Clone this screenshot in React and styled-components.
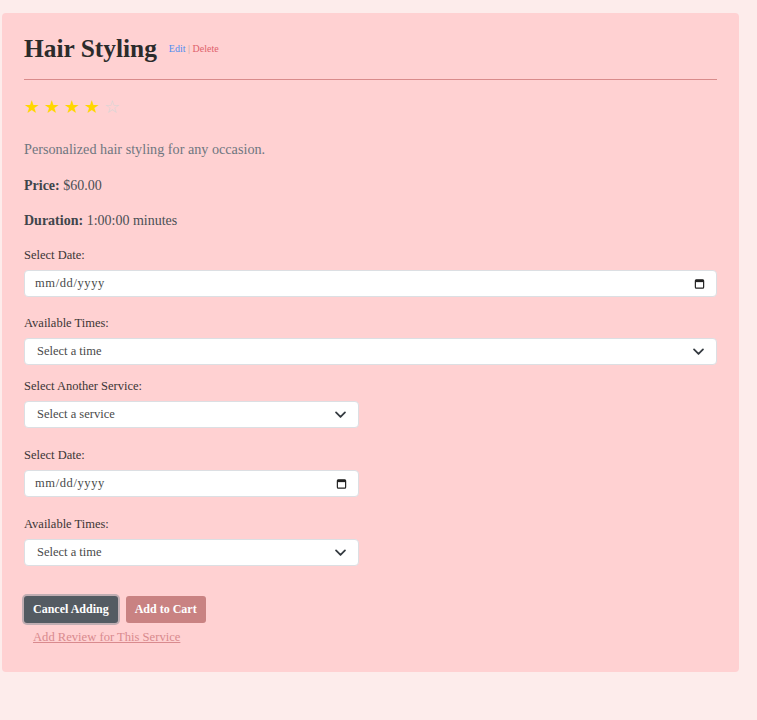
import React from 'react';
import styled, { createGlobalStyle } from 'styled-components';

const GlobalStyle = createGlobalStyle`
  body {
    margin: 0;
    background: #fdeceb;
    font-family: "Liberation Serif", "Times New Roman", serif;
    color: #3a3a3a;
  }
`;

const Page = styled.div`
  padding: 13px 18px 48px 2px;
`;

const Card = styled.div`
  background: #ffd1d2;
  border-radius: 4px;
  padding: 20px 22px 26px;
  display: flex;
  flex-direction: column;
`;

const TitleRow = styled.div`
  display: flex;
  align-items: center;
  gap: 12px;
  height: 30px;
`;

const Title = styled.h2`
  margin: 0;
  font-size: 25.4px;
  line-height: 30px;
  font-weight: 700;
  color: #2b2b2b;
`;

const Actions = styled.span`
  font-size: 10px;
  margin-top: 1px;
  color: #b9a2a2;
`;

const ActionLink = styled.a`
  color: ${(p) => (p.danger ? '#e0626c' : '#4d8cf0')};
  text-decoration: none;
  cursor: pointer;
`;

const Rule = styled.hr`
  border: 0;
  border-top: 1px solid #d98b8b;
  margin: 16px 0 0;
`;

const Stars = styled.div`
  display: flex;
  gap: 4px;
  margin-top: 15px;
  font-size: 18px;
  line-height: 24px;
`;

const Star = styled.span`
  width: 16px;
  color: ${(p) => (p.filled ? '#ffd700' : '#d6d6d6')};
`;

const Text = styled.p`
  margin: ${(p) => p.gap || 15}px 0 0;
  font-size: ${(p) => (p.muted ? 14.2 : 14)}px;
  line-height: 20px;
  color: ${(p) => (p.muted ? '#6f7680' : '#4a4f55')};

  b {
    color: #40454b;
  }
`;

const Field = styled.div`
  display: flex;
  flex-direction: column;
  gap: 6px;
  margin-top: ${(p) => p.gap}px;
  width: ${(p) => (p.half ? '335px' : '100%')};
`;

const Label = styled.label`
  font-size: 12.5px;
  line-height: 18px;
  color: #3b3535;
`;

const Control = styled.div`
  height: 27px;
  background: #fff;
  border: 1px solid #dcdfe3;
  border-radius: 4px;
  box-sizing: border-box;
  display: flex;
  align-items: center;
  justify-content: space-between;
  padding: 0 11px 0 12px;
  font-size: 12.5px;
  color: #4a4a4a;
`;

const DateText = styled.span`
  margin-left: -2px;
  font-size: 12.5px;
  letter-spacing: 0.6px;
`;

const Buttons = styled.div`
  display: flex;
  gap: 8px;
  margin-top: 30px;
`;

const Button = styled.button`
  height: 27px;
  padding: 0 9px;
  border: 0;
  border-radius: 3px;
  font-family: inherit;
  font-size: 12px;
  font-weight: 700;
  color: #fff;
  background: ${(p) => (p.secondary ? '#545b62' : '#c98282')};
  box-shadow: ${(p) => (p.secondary ? '0 0 0 2px rgba(130,138,145,0.5)' : 'none')};
`;

const ReviewLink = styled.a`
  margin: 5px 0 0 9px;
  font-size: 12.6px;
  line-height: 18px;
  color: #d98a8e;
  text-decoration: underline;
  align-self: flex-start;
`;

const Chevron = () => (
  <svg width="13" height="13" viewBox="0 0 16 16" fill="none" stroke="#343a40" strokeWidth="2.2" strokeLinecap="round" strokeLinejoin="round">
    <path d="M2.5 5.5L8 11l5.5-5.5" />
  </svg>
);

const Calendar = () => (
  <svg width="11" height="11" viewBox="0 0 12 12" fill="none">
    <rect x="1.5" y="2" width="9" height="9" rx="1" stroke="#222" strokeWidth="1.3" />
    <rect x="1.5" y="2" width="9" height="2.5" fill="#222" />
  </svg>
);

const DateField = ({ gap, half }) => (
  <Field gap={gap} half={half}>
    <Label>Select Date:</Label>
    <Control>
      <DateText>mm/dd/yyyy</DateText>
      <Calendar />
    </Control>
  </Field>
);

const SelectField = ({ gap, half, label, placeholder }) => (
  <Field gap={gap} half={half}>
    <Label>{label}</Label>
    <Control>
      <span>{placeholder}</span>
      <Chevron />
    </Control>
  </Field>
);

export default function App() {
  return (
    <Page>
      <GlobalStyle />
      <Card>
        <TitleRow>
          <Title>Hair Styling</Title>
          <Actions>
            <ActionLink>Edit</ActionLink> | <ActionLink danger>Delete</ActionLink>
          </Actions>
        </TitleRow>
        <Rule />
        <Stars>
          {[1, 2, 3, 4, 5].map((n) => (
            <Star key={n} filled={n <= 4}>{n <= 4 ? '★' : '☆'}</Star>
          ))}
        </Stars>
        <Text muted gap={20}>Personalized hair styling for any occasion.</Text>
        <Text gap={17}><b>Price:</b> $60.00</Text>
        <Text gap={15}><b>Duration:</b> 1:00:00 minutes</Text>
        <DateField gap={15} />
        <SelectField gap={17} label="Available Times:" placeholder="Select a time" />
        <SelectField gap={12} half label="Select Another Service:" placeholder="Select a service" />
        <DateField gap={18} half />
        <SelectField gap={18} half label="Available Times:" placeholder="Select a time" />
        <Buttons>
          <Button secondary>Cancel Adding</Button>
          <Button>Add to Cart</Button>
        </Buttons>
        <ReviewLink>Add Review for This Service</ReviewLink>
      </Card>
    </Page>
  );
}
